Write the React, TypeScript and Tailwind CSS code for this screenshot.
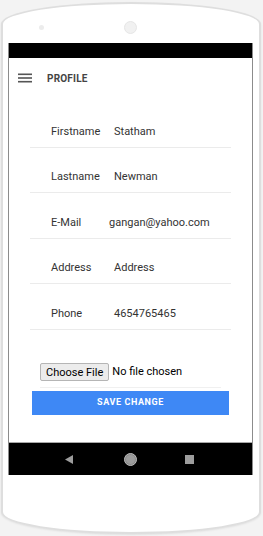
import React from "react";

interface RowProps {
  label: string;
  value: string;
  labelWidth?: string;
  tall?: boolean;
}

const Row: React.FC<RowProps> = ({ label, value, labelWidth = "w-[84px]", tall }) => (
  <div
    className={`flex border-b border-[#ebebeb] pb-[9px] text-[11px] leading-[13px] text-[#333] ${
      tall ? "pt-[23px]" : "pt-[22px]"
    }`}
  >
    <span className={`${labelWidth} shrink-0 pl-[21px]`}>{label}</span>
    <span>{value}</span>
  </div>
);

const App: React.FC = () => (
  <div
    className="h-[536px] w-[263px] overflow-hidden bg-[#f3f3f3] pt-[2px] pl-px"
    style={{ fontFamily: "Roboto, 'Liberation Sans', sans-serif" }}
  >
    <div className="flex h-[532px] w-[260px] flex-col rounded-[130px/22px] border-2 border-[#dedede] bg-white shadow-[0_1px_2px_rgba(0,0,0,0.08)]">
      {/* top of phone */}
      <div className="relative h-[39px] shrink-0">
        <div className="absolute left-[36px] top-[21px] h-[5px] w-[5px] rounded-full bg-[#ececec]" />
        <div className="absolute left-[121px] top-[17px] h-[13px] w-[13px] rounded-full border border-[#e6e6e6] bg-[#f1f1f1]" />
      </div>

      {/* screen */}
      <div className="ml-[5px] flex w-[245px] flex-col border-x border-[#8c8c8c]">
        <div className="h-[15px] bg-black" />
        <div className="flex h-[384px] flex-col bg-white">
          <div className="flex h-[40px] items-center">
            <svg className="ml-[9px] h-[10px] w-[14px]" viewBox="0 0 14 10">
              <rect x="0" y="0.5" width="14" height="1.6" fill="#555" />
              <rect x="0" y="4.2" width="14" height="1.6" fill="#555" />
              <rect x="0" y="7.9" width="14" height="1.6" fill="#555" />
            </svg>
            <span className="ml-[15px] text-[10px] font-bold tracking-[0.2px] text-[#444]">PROFILE</span>
          </div>

          <div className="mx-[21px] mt-[4px] flex flex-col">
            <Row label="Firstname" value="Statham" tall />
            <Row label="Lastname" value="Newman" />
            <Row label="E-Mail" value="gangan@yahoo.com" labelWidth="w-[79px]" tall />
            <Row label="Address" value="Address" />
            <Row label="Phone" value="4654765465" tall />
          </div>

          <div className="mx-[31px] mt-[33px] flex items-center border-b border-[#f0f0f0] pb-[6px]">
            <button className="h-[18px] rounded-[2px] border border-[#b5b5b5] bg-[#ececec] px-[5px] text-[11px] leading-none text-black">
              Choose File
            </button>
            <span className="ml-[3px] text-[11px] text-black">No file chosen</span>
          </div>

          <div className="mx-[23px] mt-[3px] flex h-[24px] items-center justify-center bg-[#3e88f5] text-[9px] font-bold tracking-[0.6px] text-white">
            SAVE CHANGE
          </div>
        </div>

        {/* nav bar */}
        <div className="flex h-[33px] items-center border-t border-[#a8a8a8] bg-black">
          <svg className="ml-[56px] h-[9px] w-[8px]" viewBox="0 0 8 9">
            <polygon points="8,0 8,9 0,4.5" fill="#9d9d9d" />
          </svg>
          <div className="ml-[51px] flex h-[13px] w-[13px] items-center justify-center rounded-full border border-[#bdbdbd] bg-[#8a8a8a]">
            <div className="h-[9px] w-[9px] rounded-full bg-[#9c9c9c]" />
          </div>
          <div className="ml-[48px] h-[9px] w-[9px] bg-[#9d9d9d]" />
        </div>
      </div>
    </div>
  </div>
);

export default App;
